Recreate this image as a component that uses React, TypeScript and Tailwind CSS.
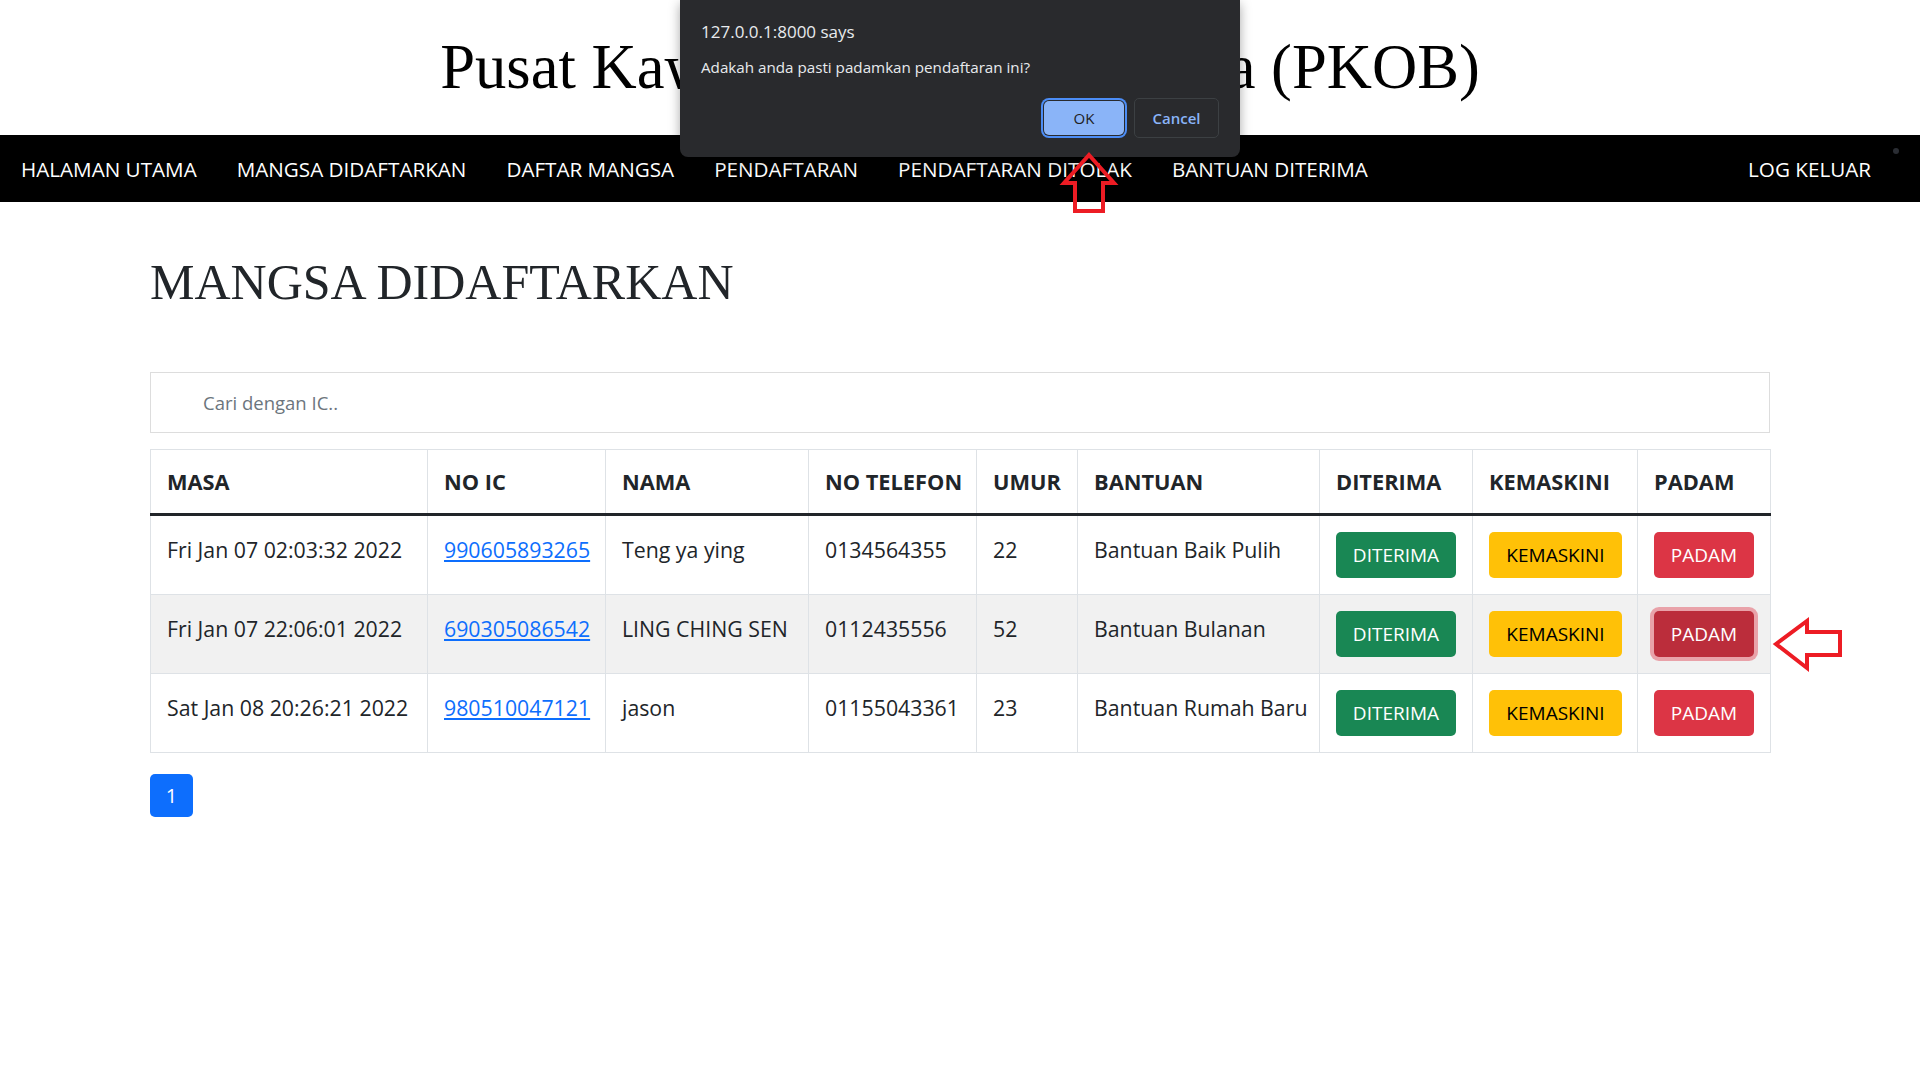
import { useState } from 'react';

const navLinks = [
  'HALAMAN UTAMA',
  'MANGSA DIDAFTARKAN',
  'DAFTAR MANGSA',
  'PENDAFTARAN',
  'PENDAFTARAN DITOLAK',
  'BANTUAN DITERIMA',
];

const rows = [
  { masa: 'Fri Jan 07 02:03:32 2022', ic: '990605893265', nama: 'Teng ya ying', tel: '0134564355', umur: '22', bantuan: 'Bantuan Baik Pulih' },
  { masa: 'Fri Jan 07 22:06:01 2022', ic: '690305086542', nama: 'LING CHING SEN', tel: '0112435556', umur: '52', bantuan: 'Bantuan Bulanan' },
  { masa: 'Sat Jan 08 20:26:21 2022', ic: '980510047121', nama: 'jason', tel: '01155043361', umur: '23', bantuan: 'Bantuan Rumah Baru' },
];

const headers = [
  { name: 'MASA', w: 'w-[277px]' },
  { name: 'NO IC', w: 'w-[178px]' },
  { name: 'NAMA', w: 'w-[203px]' },
  { name: 'NO TELEFON', w: 'w-[168px]' },
  { name: 'UMUR', w: 'w-[101px]' },
  { name: 'BANTUAN', w: 'w-[242px]' },
  { name: 'DITERIMA', w: 'w-[153px]' },
  { name: 'KEMASKINI', w: 'w-[165px]' },
  { name: 'PADAM', w: 'w-[133px]' },
];

export default function App() {
  const [search, setSearch] = useState('');

  return (
    <div className="relative min-h-[1080px] bg-white font-['Open_Sans',sans-serif] text-[#212529]">
      {/* Site title */}
      <header className="h-[135px] pt-[36px] text-center">
        <h1 className="font-['Liberation_Serif',serif] text-[62.6px] leading-none text-black">
          Pusat Kawalan Operasi Bencana (PKOB)
        </h1>
      </header>

      {/* Nav */}
      <nav className="flex h-[67px] items-center bg-black pl-px pr-[29px] pt-[2px]">
        {navLinks.map((link) => (
          <a key={link} href="#" className="whitespace-nowrap px-5 text-[20.65px] text-white">
            {link}
          </a>
        ))}
        <a href="#" className="ml-auto whitespace-nowrap px-5 text-[20.65px] text-white">
          LOG KELUAR
        </a>
      </nav>

      <main className="mx-auto w-[1620px]">
        <h2 className="mt-[55px] font-['Liberation_Serif',serif] text-[50px] leading-none">
          MANGSA DIDAFTARKAN
        </h2>

        <input
          value={search}
          onChange={(e) => setSearch(e.target.value)}
          placeholder="Cari dengan IC.."
          className="mt-[65px] block h-[61px] w-full border border-[#dddddd] pl-[52px] text-[18.5px] outline-none placeholder:text-[#6c757d]"
        />

        <table className="mt-[16px] w-full table-fixed border-collapse border border-[#dee2e6] text-[21.3px]">
          <thead>
            <tr>
              {headers.map((h) => (
                <th
                  key={h.name}
                  className={`${h.w} whitespace-nowrap border border-b-[3px] border-[#dee2e6] border-b-[#212529] px-4 pb-[15px] pt-[16px] text-left text-[21.8px] font-bold leading-[32px]`}
                >
                  {h.name}
                </th>
              ))}
            </tr>
          </thead>
          <tbody>
            {rows.map((r, i) => (
              <tr key={r.ic} className={i === 1 ? 'bg-[#f1f1f1]' : ''}>
                <td className="whitespace-nowrap border border-[#dee2e6] p-4 align-top leading-[36px]">{r.masa}</td>
                <td className="whitespace-nowrap border border-[#dee2e6] p-4 align-top leading-[36px]">
                  <a href="#" className="text-[#0d6efd] underline">{r.ic}</a>
                </td>
                <td className="whitespace-nowrap border border-[#dee2e6] p-4 align-top leading-[36px]">{r.nama}</td>
                <td className="whitespace-nowrap border border-[#dee2e6] p-4 align-top leading-[36px]">{r.tel}</td>
                <td className="whitespace-nowrap border border-[#dee2e6] p-4 align-top leading-[36px]">{r.umur}</td>
                <td className="whitespace-nowrap border border-[#dee2e6] p-4 align-top leading-[36px]">{r.bantuan}</td>
                <td className="border border-[#dee2e6] p-4 align-top">
                  <button className="flex h-[46px] w-[120px] items-center justify-center rounded-[5px] bg-[#198754] text-[19px] text-white">
                    DITERIMA
                  </button>
                </td>
                <td className="border border-[#dee2e6] p-4 align-top">
                  <button className="flex h-[46px] w-[133px] items-center justify-center rounded-[5px] bg-[#ffc107] text-[19px] text-black">
                    KEMASKINI
                  </button>
                </td>
                <td className="border border-[#dee2e6] p-4 align-top">
                  {i === 1 ? (
                    <button className="flex h-[46px] w-[100px] items-center justify-center rounded-[5px] bg-[#bb2d3b] text-[19px] text-white shadow-[0_0_0_4px_rgba(225,83,97,0.5)]">
                      PADAM
                    </button>
                  ) : (
                    <button className="flex h-[46px] w-[100px] items-center justify-center rounded-[5px] bg-[#dc3545] text-[19px] text-white">
                      PADAM
                    </button>
                  )}
                </td>
              </tr>
            ))}
          </tbody>
        </table>

        <div className="mt-[21px] flex">
          <a href="#" className="flex h-[43px] w-[43px] items-center justify-center rounded-[5px] bg-[#0d6efd] text-[20px] text-white">
            1
          </a>
        </div>
      </main>

      {/* Browser confirm dialog */}
      <div className="absolute left-[680px] top-0 h-[157px] w-[560px] rounded-b-[8px] bg-[#292a2d] px-[21px] shadow-[0_4px_12px_rgba(0,0,0,0.35)]">
        <div className="pt-[19px] text-[17px] leading-[26px] text-[#e8eaed]">127.0.0.1:8000 says</div>
        <div className="mt-[11px] text-[15.2px] leading-[22px] text-[#e8eaed]">
          Adakah anda pasti padamkan pendaftaran ini?
        </div>
        <div className="mt-[20px] flex justify-end gap-[10px]">
          <button className="mt-[3px] h-[34px] w-[80px] rounded-[5px] bg-[#8ab4f8] text-[15px] text-[#202124] ring-2 ring-[#4c8df6] ring-offset-1 ring-offset-[#292a2d]">
            OK
          </button>
          <button className="h-[40px] w-[85px] rounded-[5px] border border-[#3c4043] text-[15px] font-semibold text-[#8ab4f8]">
            Cancel
          </button>
        </div>
      </div>

      {/* Screenshot annotations */}
      <svg className="pointer-events-none absolute left-0 top-0" width="1920" height="1080" viewBox="0 0 1920 1080">
        <polygon
          points="1089,155 1114,183 1103,183 1103,211 1075,211 1075,183 1064,183"
          fill="none"
          stroke="#ed1c24"
          strokeWidth="4"
          strokeLinejoin="miter"
        />
        <polygon
          points="1776,644 1807,621 1807,632 1840,632 1840,655 1807,655 1807,668"
          fill="none"
          stroke="#ed1c24"
          strokeWidth="4"
          strokeLinejoin="miter"
        />
        <circle cx="1896" cy="151" r="3" fill="#2a2d33" />
      </svg>
    </div>
  );
}
